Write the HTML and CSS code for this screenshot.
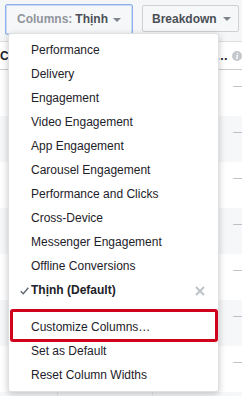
FILE: index.html
```html
<!DOCTYPE html>
<html>
<head>
<meta charset="utf-8">
<link rel="stylesheet" href="styles.css">
</head>
<body>
<div class="page">
  <div class="toolbar">
    <button class="btn btn-columns"><span class="lbl">Columns:</span> <span class="val">Thịnh</span><span class="caret"></span></button>
    <button class="btn btn-breakdown">Breakdown<span class="caret"></span></button>
  </div>
  <div class="table">
    <div class="thead">
      <span class="hc">C</span>
      <span class="hright"><span class="ell">…</span><span class="info">i</span></span>
    </div>
    <div class="row"><div class="cell c1"></div><div class="cell c2"></div><div class="cell c3"><span class="dash">—</span></div></div>
    <div class="row"><div class="cell c1"></div><div class="cell c2"></div><div class="cell c3"><span class="dash">—</span></div></div>
    <div class="row"><div class="cell c1"></div><div class="cell c2"></div><div class="cell c3"><span class="dash">—</span></div></div>
    <div class="row"><div class="cell c1"></div><div class="cell c2"></div><div class="cell c3"><span class="dash">—</span></div></div>
    <div class="row"><div class="cell c1"></div><div class="cell c2"></div><div class="cell c3"><span class="dash">—</span></div></div>
    <div class="row"><div class="cell c1"></div><div class="cell c2"></div><div class="cell c3"><span class="dash">—</span></div></div>
    <div class="row"><div class="cell c1"></div><div class="cell c2"></div><div class="cell c3"><span class="dash">—</span></div></div>
    <div class="row"><div class="cell c1"></div><div class="cell c2"></div><div class="cell c3"></div></div>
  </div>
  <div class="menu">
    <div class="item">Performance</div>
    <div class="item">Delivery</div>
    <div class="item">Engagement</div>
    <div class="item">Video Engagement</div>
    <div class="item">App Engagement</div>
    <div class="item">Carousel Engagement</div>
    <div class="item">Performance and Clicks</div>
    <div class="item">Cross-Device</div>
    <div class="item">Messenger Engagement</div>
    <div class="item">Offline Conversions</div>
    <div class="item item-selected">
      <svg class="check" width="9" height="8" viewBox="0 0 9 8"><path d="M0.8 4.2 L3.3 6.8 L8.3 0.8" fill="none" stroke="#606770" stroke-width="1.4"/></svg>
      Thịnh (Default)
      <svg class="remove" width="10" height="10" viewBox="0 0 10 10"><path d="M1 1 L9 9 M9 1 L1 9" fill="none" stroke="#bec2c9" stroke-width="2"/></svg>
    </div>
    <div class="sep"></div>
    <div class="item item-highlight">Customize Columns…</div>
    <div class="item">Set as Default</div>
    <div class="item">Reset Column Widths</div>
  </div>
</div>
</body>
</html>
```

FILE: styles.css
```css
html, body {
  margin: 0;
  padding: 0;
}
body {
  width: 242px;
  height: 396px;
  overflow: hidden;
  font-family: "Liberation Sans", Arial, sans-serif;
  font-size: 12px;
  color: #1d2129;
  background: #f5f6f7;
}
.page {
  position: relative;
  width: 242px;
  height: 396px;
  overflow: hidden;
}
.toolbar {
  height: 41px;
  box-sizing: border-box;
  padding: 4px 0 0 5px;
  display: flex;
  align-items: flex-start;
  gap: 9px;
}
.btn {
  font-family: "Liberation Sans", Arial, sans-serif;
  font-size: 12px;
  font-weight: bold;
  background: #f6f7f9;
  border: 1px solid #ced0d4;
  border-radius: 2px;
  box-sizing: border-box;
  display: flex;
  align-items: center;
  margin: 0;
  color: #4b4f56;
  white-space: nowrap;
}
.btn-columns {
  width: 128px;
  height: 31px;
  padding: 0 0 1px 11px;
  border: 1px solid #8fb1ee;
  box-shadow: 0 0 0 1px #c9d8f5 inset;
}
.btn-columns .lbl {
  color: #90949c;
}
.btn-columns .val {
  margin-left: 3px;
  color: #4b4f56;
}
.btn-breakdown {
  margin-top: 1px;
  width: 97px;
  height: 27px;
  padding: 0 0 0 9px;
}
.caret {
  display: inline-block;
  width: 0;
  height: 0;
  border-left: 4px solid transparent;
  border-right: 4px solid transparent;
  border-top: 4px solid #7f838a;
  margin-left: 5px;
  margin-top: 1px;
}
.btn-breakdown .caret {
  margin-left: 6px;
}
.table {
  background: #fff;
  border-top: 1px solid #dddfe2;
}
.thead {
  height: 27px;
  border-bottom: 1px solid #c9ccd1;
  display: flex;
  align-items: center;
  justify-content: space-between;
  font-weight: bold;
  color: #1d2129;
  background: #fff;
}
.hright {
  display: flex;
  align-items: center;
  gap: 4px;
}
.info {
  width: 10px;
  height: 10px;
  border-radius: 50%;
  background: #c4c7cc;
  color: #fff;
  font-family: "Liberation Serif", serif;
  font-style: italic;
  font-size: 9px;
  line-height: 10px;
  text-align: center;
}
.row {
  height: 46px;
  display: grid;
  grid-template-columns: 58px 95px 1fr;
  background: #fff;
}
.row:nth-child(odd) {
  background: #f6f7f9;
}
.cell.c1, .cell.c2 {
  border-right: 1px solid #e5e7ea;
}
.cell.c3 {
  display: flex;
  justify-content: flex-end;
  padding-top: 9px;
  line-height: 14px;
}
.dash {
  color: #90949c;
  font-size: 9px;
}
.menu {
  position: absolute;
  left: 8px;
  top: 33px;
  width: 211px;
  box-sizing: border-box;
  padding: 4px 0;
  background: #fff;
  border: 1px solid rgba(0, 0, 0, 0.12);
  border-radius: 3px;
  box-shadow: 0 2px 7px rgba(0, 0, 0, 0.22);
}
.item {
  position: relative;
  height: 24px;
  line-height: 24px;
  padding-left: 22px;
  white-space: nowrap;
}
.item-selected {
  font-weight: bold;
}
.check {
  position: absolute;
  left: 11px;
  top: 9px;
}
.remove {
  position: absolute;
  right: 13px;
  top: 8px;
}
.sep {
  height: 13px;
}
.item-highlight::after {
  content: "";
  position: absolute;
  left: 1px;
  right: 0;
  top: -6px;
  bottom: -3px;
  border: 3px solid #d0021b;
  border-radius: 3px;
}
```
